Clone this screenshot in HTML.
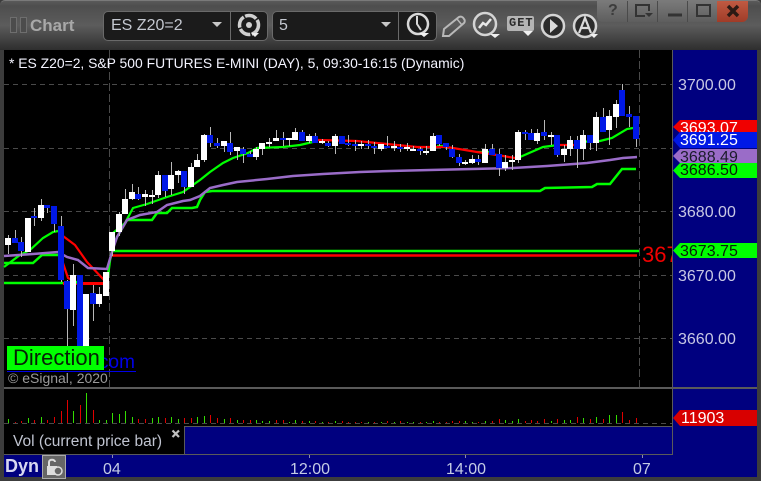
<!DOCTYPE html>
<html><head><meta charset="utf-8"><style>
html,body{margin:0;padding:0;background:#333}
#r{position:relative;width:761px;height:481px;overflow:hidden;background:#3c3c3c;font-family:"Liberation Sans",sans-serif}
#r div{position:absolute;white-space:nowrap}
.t{font-size:16px;line-height:18px;left:678px;color:#c8c8e4}
.x{font-size:16px;line-height:18px;color:#c4cce4;top:461px}
</style></head><body><div id="r">
<div style="left:0;top:0;width:761px;height:50px;background:linear-gradient(#5a5a5a 0,#4e4e4e 10%,#5c5c5c 50%,#2e2e2e 100%);border-top:1px solid #7a7a7a;box-sizing:border-box;border-radius:5px 5px 0 0"></div>
<div style="left:10px;top:17px;width:5px;height:14px;border:1px solid #6e6e6e;background:#4c4c4c"></div>
<div style="left:20px;top:17px;width:5px;height:14px;border:1px solid #6e6e6e;background:#4c4c4c"></div>
<div style="left:30px;top:16px;font-size:17px;font-weight:bold;line-height:20px;color:#a8a8a8">Chart</div>
<div style="left:103px;top:11px;width:163px;height:28px;background:#1b1b1b;border:1px solid #6a6a6a;border-radius:5px"></div>
<div style="left:230px;top:11px;width:1px;height:29px;background:#6a6a6a"></div>
<div style="left:111px;top:16px;font-size:16px;line-height:20px;color:#c4c8d0">ES Z20=2</div>
<div style="left:272px;top:11px;width:163px;height:28px;background:#1b1b1b;border:1px solid #6a6a6a;border-radius:5px"></div>
<div style="left:398px;top:11px;width:1px;height:29px;background:#6a6a6a"></div>
<div style="left:279px;top:16px;font-size:16px;line-height:20px;color:#c4c8d0">5</div>

<svg style="position:absolute;left:0;top:0" width="761" height="50" fill="none">
<path d="M212 22h10l-5 5zM381 22h10l-5 5z" fill="#c8c8c8"/>
<circle cx="249" cy="25" r="9.5" stroke="#d0d0d0" stroke-width="3.5" stroke-dasharray="12 1.5"/>
<circle cx="249" cy="25" r="3" fill="#d0d0d0"/>
<path d="M251 33h8l-4 4z" fill="#eee"/>
<circle cx="418" cy="24" r="10" stroke="#d8d8d8" stroke-width="2.5"/>
<path d="M417 16v8l4 6" stroke="#d8d8d8" stroke-width="2"/>
<path d="M419 33h10l-5 4z" fill="#f0f0f0"/>
<path d="M443 36l1-7 15-12c2-1 4 0 5 2 1 1 1 3 0 4l-15 13z" stroke="#b8b8b8" stroke-width="2"/>
<path d="M457 19l5 6" stroke="#b8b8b8" stroke-width="1.5"/>
<circle cx="485" cy="24" r="11" stroke="#d4d4d4" stroke-width="2.5"/>
<path d="M479 28l4-5 3 2 5-6" stroke="#e8e8e8" stroke-width="2.5"/>
<path d="M490 34h10l-5 4z" fill="#f0f0f0"/>
<rect x="507" y="16" width="27" height="15" rx="2" fill="#b4b4b4"/>
<path d="M523 31h10l-5 5z" fill="#f0f0f0"/>
<circle cx="553" cy="26" r="11" stroke="#d4d4d4" stroke-width="2.5" fill="#2c2c2c"/>
<path d="M550 19l8 7-8 7z" fill="#dcdcdc"/>
<circle cx="585" cy="26" r="11" stroke="#d4d4d4" stroke-width="2.5" fill="#2c2c2c"/>
<path d="M579 33l6-15 6 15M581 28h8" stroke="#dcdcdc" stroke-width="2.2"/>
<path d="M590 34h8l-4 4z" fill="#f0f0f0"/>
</svg>
<div style="left:509px;top:17px;font:bold 12px 'Liberation Mono',monospace;line-height:13px;color:#2a2a2a;letter-spacing:1px">GET</div>

<div style="left:597px;top:1px;width:151px;height:21px;background:linear-gradient(#7a7a7a,#5e5e5e);border-radius:0 0 6px 6px"></div>
<div style="left:717px;top:1px;width:31px;height:21px;background:linear-gradient(#c05a42,#a03c28);border-radius:0 0 6px 0"></div>
<div style="left:627px;top:1px;width:1px;height:21px;background:#4a4a4a"></div>
<div style="left:657px;top:1px;width:1px;height:21px;background:#4a4a4a"></div>
<div style="left:687px;top:1px;width:1px;height:21px;background:#4a4a4a"></div>
<div style="left:608px;top:2px;font:bold 16px 'Liberation Sans';line-height:18px;color:#3c3c3c">?</div>
<svg style="position:absolute;left:597px;top:0" width="151" height="24" fill="none">
<path d="M48 16h-9v-11h13v6" stroke="#333" stroke-width="2"/><path d="M48 13h8l-4 4z" fill="#333"/>
<path d="M71 15h14" stroke="#333" stroke-width="3"/>
<rect x="100" y="5" width="13" height="11" stroke="#333" stroke-width="2"/>
<path d="M131 6l10 10M141 6l-10 10" stroke="#2c1a14" stroke-width="3.5"/>
</svg>

<div style="left:4px;top:50px;width:668px;height:337px;background:#000"></div>
<div style="left:672px;top:50px;width:1px;height:405px;background:#5a5a5a"></div>
<div style="left:673px;top:50px;width:84px;height:427px;background:#00007f"></div>
<div style="left:4px;top:387px;width:753px;height:2px;background:#5a5a5a"></div>
<div style="left:4px;top:389px;width:668px;height:37px;background:#000"></div>
<div style="left:4px;top:426px;width:180px;height:28px;background:#000"></div>
<div style="left:184px;top:426px;width:488px;height:1px;background:#5a5a5a"></div>
<div style="left:184px;top:426px;width:1px;height:28px;background:#5a5a5a"></div>
<div style="left:185px;top:427px;width:487px;height:27px;background:#00007f"></div>
<div style="left:4px;top:454px;width:669px;height:1px;background:#5a5a5a"></div>
<div style="left:4px;top:455px;width:669px;height:22px;background:#00007f"></div>

<svg style="position:absolute;left:0;top:0" width="761" height="481" fill="none">
<path d="M4 84.5H672M4 148.5H672M4 211.5H672M4 275.5H672M4 338.5H672M4 423.5H672" stroke="#4a4a4a" stroke-dasharray="5 4" shape-rendering="crispEdges"/>
<path d="M109.5 50V387M639.5 50V387" stroke="#4a4a4a" stroke-dasharray="8 3" shape-rendering="crispEdges"/>
<path d="M112 251H639" stroke="#00ff00" stroke-width="2.5"/>
<path d="M112 255.5H637" stroke="#ff0000" stroke-width="2.5"/>
<path d="M4 283H63" stroke="#00ff00" stroke-width="2.5"/>
<path d="M63 283.5H104" stroke="#ff0000" stroke-width="3"/>
<path d="M63 263L68 278L76 282" stroke="#ff0000" stroke-width="2.2"/>
<path d="M58 231L63 236L75 245L87 262L104 280" stroke="#ff0000" stroke-width="2.2"/>
<path d="M4 263H33L42 255H58M74 281L78 283" stroke="#00ff00" stroke-width="2.5"/>
<path d="M4 267L20 255L30 250L43 238L53 232L58 231" stroke="#00ff00" stroke-width="2.2"/>
<path d="M107 283L110 260L112 251L117 237L127 220H152L157 213H167L172 208H192L197 207L200 200L205 192L212 191H540L545 188L592 187L597 184H610L622 169H636" stroke="#00ff00" stroke-width="2.5"/>
<path d="M113 233L125 223L133 208L147 204L167 197L183 192L190 187L200 180L210 172L223 163L233 158L248 153L257 148L283 147L300 145L317 141M437 146H447M477 152H490M520 157L543 147L558 145M577 142L600 141L612 138L627 129L633 128" stroke="#00ff00" stroke-width="2.2"/>
<path d="M318 140L357 141L377 143L417 147L447 147L477 152L497 155L515 158M558 145H577" stroke="#ff0000" stroke-width="2.2"/>
<path d="M4 256L33 254L58 252L67 257L78 260L88 268L107 269L112 252L117 237L127 220L140 215L157 212L167 205L183 201L190 200L200 196L210 188L223 185L237 182L267 179L293 176L323 174L360 172L390 171L430 170L513 168L547 166L587 163L610 160L623 158L637 157" stroke="#9a6cc8" stroke-width="2.5"/>

<path shape-rendering="crispEdges" stroke="#b8b8b8" d="M8.5 235V254M15.5 230V243M21.5 237V257M28.5 218V252M34.5 208V226M41.5 199V221M47.5 205V213M54.5 206V232M61.5 216V282M67.5 280V350M73.5 264V326M80.5 275V368M86.5 294V356M93.5 285V321M99.5 287V307M106.5 272V296M112.5 232V256M119.5 212V236M125.5 189V214M132.5 184V200M138.5 187V200M145.5 190V206M152.5 190V204M158.5 171V198M165.5 175V197M171.5 162V195M178.5 170V183M184.5 171V194M191.5 163V187M197.5 154V167M204.5 134V162M210.5 127V147M217.5 138V148M224.5 141V152M230.5 132V155M237.5 147V160M243.5 147V163M250.5 151V157M256.5 147V160M262.5 143V155M269.5 138V147M276.5 130V141M283.5 132V146M289.5 138V146M295.5 128V140M302.5 130V141M309.5 134V143M315.5 133V143M322.5 139V144M328.5 141V147M335.5 134V154M342.5 136V144M348.5 135V146M355.5 140V151M361.5 141V149M368.5 140V149M374.5 142V154M381.5 144V151M387.5 136V148M394.5 141V151M400.5 144V152M407.5 143V151M413.5 146V151M420.5 147V155M426.5 146V155M433.5 133V151M439.5 135V146M446.5 143V150M452.5 145V158M459.5 154V166M465.5 160V165M472.5 155V164M478.5 155V165M485.5 144V163M492.5 144V155M499.5 149V176M505.5 155V171M512.5 155V170M518.5 130V163M525.5 130V140M531.5 129V140M537.5 129V144M544.5 120V140M551.5 132V145M557.5 135V157M564.5 145V162M570.5 136V156M577.5 136V168M583.5 130V160M590.5 135V150M596.5 112V151M603.5 108V132M609.5 110V145M616.5 100V128M622.5 84V116M629.5 106V127M636.5 116V147"/>
<path shape-rendering="crispEdges" fill="#fff" d="M5 238h6v7h-6zM25 218h6v34h-6zM38 205h6v13h-6zM70 275h6v35h-6zM83 294h6v62h-6zM96 294h6v10h-6zM103 272h6v24h-6zM109 232h6v19h-6zM116 214h6v18h-6zM122 199h6v15h-6zM129 192h6v7h-6zM142 194h6v3h-6zM149 195h6v2h-6zM155 175h6v20h-6zM168 175h6v14h-6zM175 171h6v4h-6zM188 167h6v20h-6zM194 160h6v7h-6zM201 135h6v25h-6zM221 141h6v5h-6zM234 147h6v4h-6zM253 149h6v8h-6zM259 143h6v6h-6zM266 142h6v2h-6zM273 138h6v3h-6zM286 138h6v2h-6zM292 132h6v8h-6zM306 136h6v5h-6zM319 141h6v2h-6zM332 136h6v10h-6zM358 144h6v2h-6zM378 144h6v5h-6zM391 146h6v2h-6zM404 147h6v2h-6zM410 149h6v2h-6zM423 151h6v2h-6zM430 136h6v15h-6zM462 162h6v2h-6zM469 159h6v4h-6zM482 149h6v14h-6zM502 162h6v6h-6zM509 160h6v2h-6zM515 132h6v28h-6zM534 133h6v8h-6zM548 135h6v2h-6zM561 149h6v6h-6zM567 140h6v9h-6zM580 135h6v14h-6zM593 117h6v26h-6zM606 116h6v14h-6zM613 104h6v13h-6z"/>
<path shape-rendering="crispEdges" fill="#0018e6" d="M12 238h6v5h-6zM18 242h6v9h-6zM31 216h6v2h-6zM44 205h6v3h-6zM51 206h6v18h-6zM58 226h6v54h-6zM64 281h6v28h-6zM77 275h6v83h-6zM90 293h6v11h-6zM135 194h6v5h-6zM162 175h6v16h-6zM181 171h6v16h-6zM207 135h6v8h-6zM214 143h6v3h-6zM227 143h6v9h-6zM240 149h6v5h-6zM247 154h6v3h-6zM280 138h6v2h-6zM299 132h6v9h-6zM312 136h6v7h-6zM325 143h6v3h-6zM339 136h6v8h-6zM345 143h6v2h-6zM352 144h6v2h-6zM365 144h6v2h-6zM371 146h6v2h-6zM384 146h6v2h-6zM397 147h6v2h-6zM417 149h6v2h-6zM436 135h6v9h-6zM443 143h6v4h-6zM449 149h6v8h-6zM456 157h6v6h-6zM475 159h6v3h-6zM489 149h6v6h-6zM496 154h6v14h-6zM522 132h6v2h-6zM528 133h6v7h-6zM541 132h6v4h-6zM554 135h6v20h-6zM574 140h6v9h-6zM587 135h6v8h-6zM600 117h6v15h-6zM619 90h6v26h-6zM626 114h6v3h-6zM633 116h6v23h-6z"/>

<path shape-rendering="crispEdges" stroke="#e00000" d="M15.5 422V423M21.5 421V423M34.5 420V423M47.5 420V423M54.5 417V423M61.5 411V423M67.5 400V423M80.5 405V423M93.5 410V423M138.5 419V423M145.5 419V423M165.5 418V423M184.5 418V423M191.5 418V423M210.5 415V423M217.5 418V423M230.5 418V423M243.5 420V423M250.5 420V423M276.5 420V423M283.5 420V423M302.5 421V423M315.5 421V423M328.5 422V423M342.5 421V423M348.5 422V423M355.5 422V423M361.5 422V423M374.5 422V423M387.5 421V423M400.5 421V423M420.5 422V423M439.5 422V423M446.5 422V423M452.5 421V423M459.5 421V423M478.5 422V423M492.5 421V423M499.5 419V423M525.5 421V423M531.5 420V423M537.5 421V423M544.5 419V423M557.5 419V423M577.5 417V423M590.5 419V423M603.5 419V423M622.5 412V423M629.5 420V423M636.5 418V423"/>
<path shape-rendering="crispEdges" stroke="#33dd00" d="M8.5 419V423M28.5 418V423M41.5 417V423M73.5 411V423M86.5 393V423M99.5 420V423M106.5 420V423M112.5 413V423M119.5 414V423M125.5 411V423M132.5 417V423M152.5 418V423M158.5 417V423M171.5 417V423M178.5 419V423M197.5 417V423M204.5 416V423M224.5 419V423M237.5 420V423M256.5 420V423M262.5 421V423M269.5 421V423M289.5 422V423M295.5 420V423M309.5 421V423M322.5 422V423M335.5 421V423M368.5 422V423M381.5 422V423M394.5 422V423M407.5 422V423M413.5 422V423M426.5 422V423M433.5 421V423M465.5 421V423M472.5 422V423M485.5 421V423M505.5 420V423M512.5 421V423M518.5 419V423M551.5 421V423M564.5 420V423M570.5 420V423M583.5 418V423M596.5 417V423M609.5 415V423M616.5 415V423"/>
<path d="M112.5 455v3M309.5 455v3M465.5 455v3M642.5 455v3" stroke="#8a8ab0" shape-rendering="crispEdges"/>

<path d="M680 120H757V133H680L673 127z" fill="#f00000"/>
<path d="M680 243H757V258H680L673 250.5z" fill="#00ff00"/>
<path d="M680 410H757V426H680L673 418z" fill="#d80000"/>
</svg>

<div class="t" style="top:77px">3700.00</div>
<div class="t" style="top:204px">3680.00</div>
<div class="t" style="top:268px">3670.00</div>
<div class="t" style="top:331px">3660.00</div>
<div style="left:680px;top:120px;font-size:16px;line-height:18px;color:#fff">3693.07</div>
<svg style="position:absolute;left:0;top:0" width="761" height="481"><path d="M680 132H757V148H680L673 140z" fill="#0018e6"/><path d="M680 149H757V163H680L673 156z" fill="#9a6cc8"/></svg>
<div style="left:680px;top:132px;font-size:16px;line-height:18px;color:#fff">3691.25</div>
<div style="left:680px;top:149px;height:14px;overflow:hidden;font-size:16px;line-height:18px;color:#1c1c2c">3688.49</div>
<svg style="position:absolute;left:0;top:0" width="761" height="481"><path d="M680 163H757V178H680L673 170.5z" fill="#00ff00"/></svg>
<div style="left:680px;top:162px;font-size:16px;line-height:18px;color:#062006">3686.50</div>
<div style="left:680px;top:243px;font-size:16px;line-height:18px;color:#062006">3673.75</div>
<div style="left:681px;top:410px;font-size:16px;line-height:18px;color:#fff">11903</div>
<div style="left:642px;top:243px;width:30px;height:24px;overflow:hidden;font-size:22px;line-height:24px;color:#f00000">367</div>

<div style="left:9px;top:55px;font-size:13.9px;line-height:16px;color:#f4f4ff">* ES Z20=2, S&amp;P 500 FUTURES E-MINI (DAY), 5, 09:30-16:15 (Dynamic)</div>
<div style="left:99px;top:351px;font-size:19px;line-height:24px;color:#0000e8">com</div>
<div style="left:7px;top:371px;width:129px;height:1px;background:#0000e8"></div>
<div style="left:7px;top:346px;width:97px;height:24px;background:#00ff00"></div>
<div style="left:13px;top:345px;font-size:22px;line-height:26px;color:#062006">Direction</div>
<div style="left:8px;top:370px;font-size:14px;line-height:16px;color:#9a9a9a">© eSignal, 2020</div>
<div style="left:13px;top:433px;font-size:15.5px;line-height:18px;color:#c0c4d0">Vol (current price bar)</div>
<svg style="position:absolute;left:171px;top:429px" width="10" height="10"><path d="M1.5 1.5l6.5 6.5M8 1.5l-6.5 6.5" stroke="#c0c0c0" stroke-width="2.2"/></svg>

<div style="left:5px;top:456px;font-size:18px;font-weight:bold;line-height:21px;color:#d8d8f0">Dyn</div>
<div style="left:42px;top:455px;width:22px;height:22px;background:#666;border:1px solid #aaa"></div>
<svg style="position:absolute;left:42px;top:455px" width="24" height="24" fill="none"><path d="M7 11V7c0-3 6-3 6 0" stroke="#ddd" stroke-width="2"/><rect x="5" y="11" width="10" height="9" fill="#ddd"/><circle cx="16" cy="16" r="4" fill="#666" stroke="#ddd" stroke-width="1.5"/></svg>
<div class="x" style="left:103px">04</div>
<div class="x" style="left:290px">12:00</div>
<div class="x" style="left:446px">14:00</div>
<div class="x" style="left:633px">07</div>
</div></body></html>
